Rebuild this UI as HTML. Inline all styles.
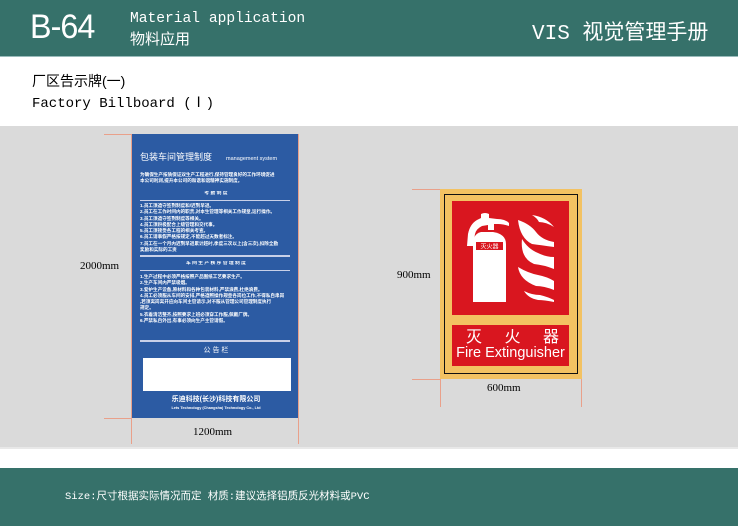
<!DOCTYPE html>
<html><head><meta charset="utf-8"><style>
*{margin:0;padding:0;box-sizing:border-box}
body{width:738px;height:526px;background:#fff;position:relative;overflow:hidden;font-family:"Liberation Sans","Noto Sans CJK SC",sans-serif}
.a{position:absolute}
.hd{left:0;top:0;width:738px;height:57px;background:#36716a;border-bottom:1px solid #9bb}
.w{color:#fff}
.mono{font-family:"Liberation Mono","Noto Sans CJK SC",monospace}
.band{left:0;top:126px;width:738px;height:323px;background:#dadada;border-bottom:2px solid #e8e8e8}
.ft{left:0;top:468px;width:738px;height:58px;background:#36716a}
.ser{font-family:"Liberation Serif",serif;font-size:11px;color:#000}
.bl{background:#2c5ba3;left:132px;top:134px;width:166px;height:284px;color:#fff}
.t{position:absolute;font-size:4.6px;font-weight:bold;line-height:6.3px;left:8px;width:152px;white-space:nowrap;overflow:hidden}
.ln{position:absolute;left:8px;width:150px;height:1px;background:#c8d0e8}
.or{left:440px;top:189px;width:142px;height:190px;background:#f3c262}
.rd{background:#d9161f}
</style></head><body>
<div class="a hd"></div>
<div class="a w" style="left:30px;top:8px;font-size:34px;letter-spacing:-1px;transform:scaleX(0.95);transform-origin:left">B-64</div>
<div class="a w mono" style="left:130px;top:11px;font-size:14.6px">Material application</div>
<div class="a w" style="left:130px;top:28px;font-size:15px">物料应用</div>
<div class="a w" style="left:532px;top:16px;font-size:21px;font-family:'Liberation Mono','Noto Sans CJK SC',monospace">VIS 视觉管理手册</div>
<div class="a" style="left:32px;top:71px;font-size:14px">厂区告示牌(一)</div>
<div class="a mono" style="left:32px;top:92px;font-size:14px">Factory Billboard (Ⅰ)</div>
<div class="a band"></div>
<div class="a ft"></div>
<div class="a w" style="left:65px;top:488px;font-size:10.5px;font-family:'Liberation Mono','Noto Sans CJK SC',monospace">Size:尺寸根据实际情况而定 材质:建议选择铝质反光材料或PVC</div>

<div class="a" style="left:104px;top:134px;width:28px;height:1px;background:#e9a08a"></div>
<div class="a" style="left:104px;top:418px;width:28px;height:1px;background:#e9a08a"></div>
<div class="a" style="left:131px;top:134px;width:1px;height:310px;background:#e9a08a"></div>
<div class="a" style="left:298px;top:134px;width:1px;height:310px;background:#e9a08a"></div>
<div class="a ser" style="left:80px;top:260px">2000mm</div>
<div class="a ser" style="left:193px;top:426px">1200mm</div>

<div class="a bl">
<div class="t" style="top:18px;font-size:9px;line-height:10px;font-weight:normal">包装车间管理制度<span style="font-size:5.5px;margin-left:14px">management system</span></div>
<div class="t" style="top:38px">为确保生产按质保证双生产工程进行,保持管理良好的工作环境促进<br>本公司利润,提升本公司的和谐和谐精神实施制度。</div>
<div class="t" style="top:57px;text-align:center;font-size:4.8px">考 勤 制 度</div>
<div class="ln" style="top:66px"></div>
<div class="t" style="top:69px">1.员工须遵守签到制度和/迟到早退。<br>2.员工在工作时间内的职责,对本生管理等相关工作规章,运行操作。<br>3.员工须遵守签到制度等相关。<br>4.员工须积极配合上级管理和交代事。<br>5.员工须接受各工程的相关考查。<br>6.员工请事假严格按规定,不能超过天数者标注。<br>7.员工在一个月内迟到早退累计超时,季度三次以上(含三次),扣除全勤<br>  奖励和实际的工资</div>
<div class="ln" style="top:121px;height:2px"></div>
<div class="t" style="top:127px;text-align:center;font-size:4.8px">车 间 生 产 秩 序 管 理 制 度</div>
<div class="ln" style="top:136px"></div>
<div class="t" style="top:140px">1.生产过程中必须严格按照产品图纸工艺要求生产。<br>2.生产车间内严禁吸烟。<br>3.爱护生产设备,原材料和各种包装材料,严禁浪费,杜绝浪费。<br>4.员工必须服从车间的安排,严格遵照操作规章各岗位工作,不得私自串岗<br>  ,若须离岗离开应向车间主管请示,对不服从管理公司管理制度执行<br>  规定。<br>5.衣着清洁整齐,按照要求上班必须穿工作服,佩戴厂牌。<br>6.严禁私自外出,有事必须向生产主管请假。</div>
<div class="ln" style="top:206px;height:2px"></div>
<div class="t" style="top:212px;text-align:center;font-size:7px;line-height:9px;font-weight:normal">公 告 栏</div>
<div class="a" style="left:11px;top:224px;width:148px;height:33px;background:#fff"></div>
<div class="t" style="top:261px;text-align:center;font-size:7px;line-height:9px">乐迪科技(长沙)科技有限公司</div>
<div class="t" style="top:271px;text-align:center;font-size:3.8px">Lets Technology (Changsha) Technology Co., Ltd</div>
</div>

<div class="a" style="left:412px;top:189px;width:28px;height:1px;background:#e9a08a"></div>
<div class="a" style="left:412px;top:379px;width:28px;height:1px;background:#e9a08a"></div>
<div class="a" style="left:440px;top:379px;width:1px;height:28px;background:#e9a08a"></div>
<div class="a" style="left:581px;top:379px;width:1px;height:28px;background:#e9a08a"></div>
<div class="a ser" style="left:397px;top:269px">900mm</div>
<div class="a ser" style="left:487px;top:382px">600mm</div>

<div class="a or"></div>
<div class="a" style="left:444px;top:194px;width:134px;height:180px;border:1.5px solid #111"></div>
<div class="a rd" style="left:452px;top:201px;width:117px;height:114px">
<svg width="117" height="114" viewBox="0 0 117 114">
<path d="M29 13 q4 -2 8 0 v4 l8 1 q8 0 12 4 v3 q-6 -2 -11 -2 h-4 v6 q-3 0 -6 0 v-5 l-6 1 q-6 3 -7 8 l-2 12 h-6 l1 -12 q2 -10 9 -14 l4 -2 z" fill="#fff"/>
<path d="M29 31 h12 q13 2 13 12 v58 h-33 v-58 q0 -10 8 -12z" fill="#fff"/>
<rect x="24" y="41" width="27" height="8" fill="#d9161f"/>
<text x="37.5" y="47.5" font-size="6" fill="#fff" text-anchor="middle" font-family="Noto Sans CJK SC,sans-serif">灭火器</text>
<path d="M80 14 q14 2 22 12 q-8 -5 -15 -5 q-2 -4 -7 -7z" fill="#fff"/>
<path d="M66 19 q12 4 18 12 q6 8 18 10 v5 q-14 -2 -22 -3 q-12 -6 -14 -24z" fill="#fff"/>
<path d="M70 38 q6 10 16 14 q8 4 16 4 v12 q-10 -4 -20 -5 q-14 -6 -12 -25z" fill="#fff"/>
<path d="M66 66 q10 6 20 8 q10 2 16 6 v9 q-10 -4 -18 -4 q-16 -6 -18 -19z" fill="#fff"/>
<path d="M72 90 q8 4 16 4 q8 2 14 5 v2 q-10 -2 -16 -2 q-10 -2 -14 -9z" fill="#fff"/>
</svg></div>
<div class="a rd" style="left:452px;top:325px;width:117px;height:41px;color:#fff">
<div style="display:flex;justify-content:space-between;padding:0 10px 0 14px;font-size:16px;line-height:20px;font-family:'Noto Sans CJK SC',sans-serif"><span>灭</span><span>火</span><span>器</span></div>
<div style="font-size:14.5px;line-height:17px;white-space:nowrap;text-align:center">Fire Extinguisher</div>
</div>
</body></html>
